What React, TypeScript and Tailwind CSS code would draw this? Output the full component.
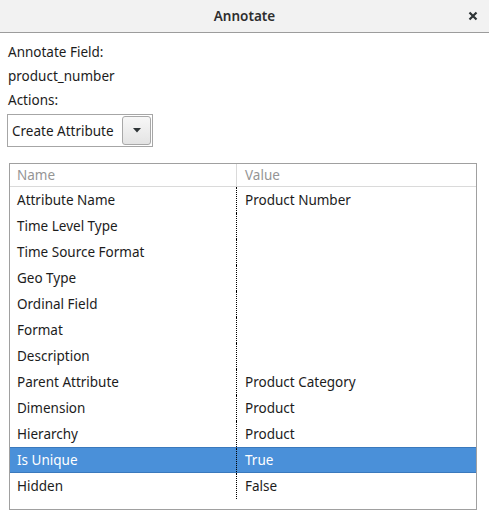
import React from "react";

const rows: [string, string][] = [
  ["Attribute Name", "Product Number"],
  ["Time Level Type", ""],
  ["Time Source Format", ""],
  ["Geo Type", ""],
  ["Ordinal Field", ""],
  ["Format", ""],
  ["Description", ""],
  ["Parent Attribute", "Product Category"],
  ["Dimension", "Product"],
  ["Hierarchy", "Product"],
  ["Is Unique", "True"],
  ["Hidden", "False"],
];

export default function App() {
  return (
    <div
      className="w-[489px] h-[519px] bg-white text-[13.5px] text-[#1c1c1c] overflow-hidden flex flex-col"
      style={{ fontFamily: '"Noto Sans", "Open Sans", sans-serif' }}
    >
      <div className="h-[33px] shrink-0 bg-[#f2f2f2] border-b border-[#9c9c9c] flex items-center relative">
        <div className="flex-1 text-center font-semibold text-[13.5px] text-[#2e2e2e]">Annotate</div>
        <div className="absolute right-[11px] top-[7px] w-[10px] h-[18px] flex items-center justify-center">
          <svg width="10" height="10" viewBox="0 0 10 10">
            <path d="M1.5 1.5 L8.5 8.5 M8.5 1.5 L1.5 8.5" stroke="#2e3436" strokeWidth="2.2" strokeLinecap="butt" />
          </svg>
        </div>
      </div>
      <div className="pt-[7px] pl-[8px] flex flex-col">
        <div className="h-[24px] leading-[24px]">Annotate Field:</div>
        <div className="h-[24px] leading-[24px]">product_number</div>
        <div className="h-[24px] leading-[24px]">Actions:</div>
      </div>
      <div className="ml-[7px] mt-[2px] w-[146px] h-[33px] border border-[#a6a6a6] flex items-center">
        <div className="pl-[4px] flex-1 leading-[20px]">Create Attribute</div>
        <div className="w-[29px] h-[29px] mr-[1px] rounded-[3px] border border-[#a8a8a8] bg-gradient-to-b from-[#f7f7f7] to-[#e4e4e4] flex items-center justify-center">
          <svg width="8" height="5" viewBox="0 0 8 5">
            <path d="M0 0 L8 0 L4 4.5 Z" fill="#2e3436" />
          </svg>
        </div>
      </div>
      <div className="ml-[9px] mt-[16px] w-[468px] h-[347px] border border-[#a0a0a0] flex flex-col">
        <div className="h-[23px] shrink-0 border-b border-[#dadada] flex text-[#959595]">
          <div className="w-[227px] border-r border-[#dadada] pl-[7px] leading-[22px]">Name</div>
          <div className="flex-1 pl-[8px] leading-[22px]">Value</div>
        </div>
        {rows.map(([n, v]) => {
          const sel = n === "Is Unique";
          return (
            <div
              key={n}
              className={
                sel
                  ? "h-[26px] shrink-0 flex bg-[#4a90d9] text-white border-y border-[#3b79bd]"
                  : "h-[26px] shrink-0 flex"
              }
            >
              <div className="w-[227px] border-r border-dotted border-[#000] pl-[7px] flex items-center">{n}</div>
              <div className="flex-1 pl-[8px] flex items-center">{v}</div>
            </div>
          );
        })}
      </div>
    </div>
  );
}
